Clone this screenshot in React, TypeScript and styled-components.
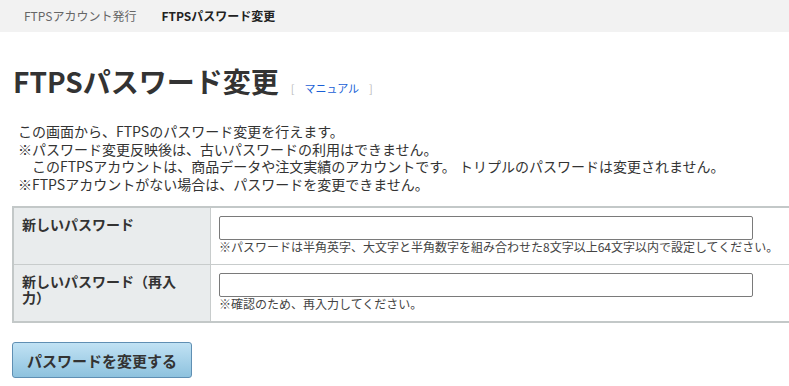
import styled, { createGlobalStyle } from 'styled-components';

const GlobalStyle = createGlobalStyle`
  html, body {
    margin: 0;
    padding: 0;
    background: #fff;
    overflow: hidden;
  }

  body {
    font-family: "Noto Sans CJK JP", "Noto Sans", sans-serif;
    color: #333;
  }
`;

const Page = styled.div`
  width: 960px;
`;

const TabBar = styled.nav`
  height: 32px;
  background: #f2f2f2;
  display: flex;
  align-items: center;
  gap: 25px;
  padding-left: 24px;
`;

const Tab = styled.span<{ $active?: boolean }>`
  font-size: 12px;
  line-height: 32px;
  color: ${(props) => (props.$active ? '#222' : '#666')};
  font-weight: ${(props) => (props.$active ? 700 : 400)};
`;

const Content = styled.main`
  padding: 0 0 0 12px;
`;

const TitleRow = styled.div`
  display: flex;
  align-items: baseline;
  gap: 12px;
  margin-top: 30px;
  padding-left: 1px;
`;

const Title = styled.h1`
  margin: 0;
  font-size: 28px;
  line-height: 38px;
  font-weight: 700;
  color: #333;
`;

const Manual = styled.span`
  font-size: 11px;
  color: #bbb;

  & a {
    color: #1a5fd6;
    text-decoration: none;
    margin: 0 10px;
  }
`;

const Notes = styled.div`
  margin: 23px 0 0 6px;
  font-size: 14px;
  line-height: 17.5px;
`;

const Note = styled.p<{ $indent?: boolean }>`
  margin: 0;
  padding-left: ${(props) => (props.$indent ? '14px' : '0')};
`;

const Form = styled.table`
  margin-top: 13px;
  width: 100%;
  border-collapse: collapse;
  border: 2px solid #c3c8c8;
  border-right: none;
`;

const Row = styled.tr`
  & + & {
    border-top: 1px solid #c8cccc;
  }
`;

const Label = styled.th`
  width: 160px;
  background: #e9eced;
  border-right: 1px solid #c8cccc;
  text-align: left;
  vertical-align: top;
  padding: 8px 28px 0 8px;
  font-size: 14px;
  line-height: 16px;
  font-weight: 700;
  color: #333;
`;

const Field = styled.td`
  padding: 8px 8px 10px;
  vertical-align: top;
`;

const Input = styled.input`
  display: block;
  box-sizing: border-box;
  width: 534px;
  height: 24px;
  margin: 0;
  border: 1px solid #7a7a7a;
  border-radius: 2px;
  background: #fff;
`;

const Hint = styled.div`
  font-size: 12px;
  line-height: 14px;
  color: #444;
`;

const Submit = styled.button`
  margin-top: 19px;
  width: 180px;
  height: 36px;
  border: 1px solid #5f8fb3;
  border-radius: 3px;
  background: linear-gradient(#c1e2f4, #8ec2de);
  font-family: inherit;
  font-size: 15px;
  font-weight: 700;
  color: #333;
  cursor: pointer;
`;

export default function App() {
  return (
    <Page>
      <GlobalStyle />
      <TabBar>
        <Tab>FTPSアカウント発行</Tab>
        <Tab $active>FTPSパスワード変更</Tab>
      </TabBar>
      <Content>
        <TitleRow>
          <Title>FTPSパスワード変更</Title>
          <Manual>
            [<a href="#">マニュアル</a>]
          </Manual>
        </TitleRow>
        <Notes>
          <Note>この画面から、FTPSのパスワード変更を行えます。</Note>
          <Note>※パスワード変更反映後は、古いパスワードの利用はできません。</Note>
          <Note $indent>このFTPSアカウントは、商品データや注文実績のアカウントです。 トリプルのパスワードは変更されません。</Note>
          <Note>※FTPSアカウントがない場合は、パスワードを変更できません。</Note>
        </Notes>
        <Form>
          <tbody>
            <Row>
              <Label>新しいパスワード</Label>
              <Field>
                <Input type="password" />
                <Hint>※パスワードは半角英字、大文字と半角数字を組み合わせた8文字以上64文字以内で設定してください。</Hint>
              </Field>
            </Row>
            <Row>
              <Label>新しいパスワード（再入力）</Label>
              <Field>
                <Input type="password" />
                <Hint>※確認のため、再入力してください。</Hint>
              </Field>
            </Row>
          </tbody>
        </Form>
        <Submit type="button">パスワードを変更する</Submit>
      </Content>
    </Page>
  );
}
